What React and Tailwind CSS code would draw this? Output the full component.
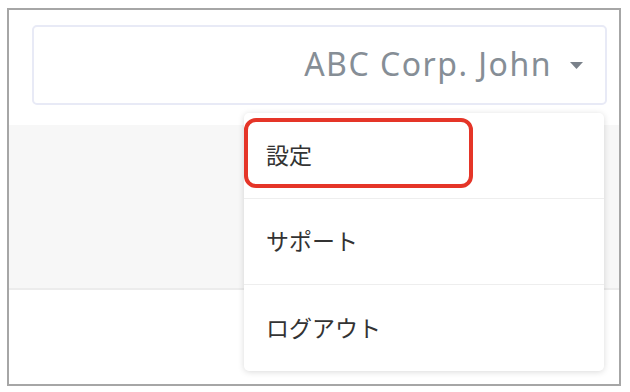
export default function App() {
  return (
    <div className="w-[630px] h-[392px] bg-white pt-[8px] pl-[7px]" style={{ fontFamily: '"Noto Sans", "Noto Sans CJK JP", sans-serif' }}>
      <div className="relative w-[614px] h-[378px] border-2 border-[#a6a6a6] bg-white flex flex-col">
        <div className="h-[115px] pl-[23px] pr-[12px] pt-[15px] shrink-0">
          <div className="h-[80px] border-2 border-[#e8eaf6] rounded-[5px] flex items-center justify-end pr-[22px] gap-[18px]">
            <span className="text-[32px] text-[#868e96] tracking-[1.5px] leading-none pb-[2px]">ABC Corp. John</span>
            <svg width="13" height="7" viewBox="0 0 13 7"><path d="M0 0h13L6.5 7z" fill="#7a818a" /></svg>
          </div>
        </div>
        <div className="h-[165px] bg-[#f7f7f7] border-b-2 border-[#ececec] shrink-0" />
        <div className="flex-1" />
        <div className="absolute left-[235px] top-[103px] w-[360px] bg-white rounded-[5px] shadow-[0_1px_6px_rgba(0,0,0,0.15)] flex flex-col">
          <div className="h-[86px] flex items-center pl-[22px] border-b border-[#eeeeee] text-[23px] text-[#333]">設定</div>
          <div className="h-[86px] flex items-center pl-[22px] border-b border-[#eeeeee] text-[23px] text-[#333]">サポート</div>
          <div className="h-[86px] flex items-center pl-[22px] text-[23px] text-[#333]">ログアウト</div>
          <div className="absolute left-0 top-[5px] w-[229px] h-[70px] border-[4px] border-[#e53528] rounded-[12px]" />
        </div>
      </div>
    </div>
  );
}
